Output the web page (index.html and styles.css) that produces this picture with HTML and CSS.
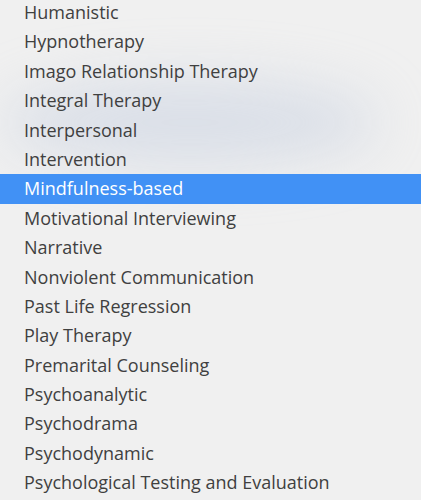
FILE: index.html
```html
<!DOCTYPE html>
<html lang="en">
<head>
    <meta charset="UTF-8" />
    <meta name="viewport" content="width=device-width, initial-scale=1.0" />
    <title>Therapy Types</title>
    <link rel="stylesheet" href="styles.css">
</head>
<body>
    <div class="picker">
        <div class="haze"></div>
        <ul class="options">
            <li>Humanistic</li>
            <li>Hypnotherapy</li>
            <li>Imago Relationship Therapy</li>
            <li>Integral Therapy</li>
            <li>Interpersonal</li>
            <li>Intervention</li>
            <li class="selected">Mindfulness-based</li>
            <li>Motivational Interviewing</li>
            <li>Narrative</li>
            <li>Nonviolent Communication</li>
            <li>Past Life Regression</li>
            <li>Play Therapy</li>
            <li>Premarital Counseling</li>
            <li>Psychoanalytic</li>
            <li>Psychodrama</li>
            <li>Psychodynamic</li>
            <li>Psychological Testing and Evaluation</li>
        </ul>
    </div>
</body>
</html>
```

FILE: styles.css
```css
    body {
        margin: 0;
        padding: 0;
        font-family: "Open Sans", Arial, sans-serif;
        background-color: #f0f0f0;
        overflow: hidden;
    }
    .picker {
        position: relative;
        width: 421px;
        height: 500px;
        overflow: hidden;
    }
    .haze {
        position: absolute;
        left: 0;
        top: 80px;
        width: 380px;
        height: 85px;
        border-radius: 50%;
        background-color: rgba(185, 198, 220, 0.4);
        filter: blur(28px);
    }
    .options {
        position: relative;
        list-style: none;
        margin: -2px 0 0 0;
        padding: 0;
    }
    .options li {
        height: 29.4px;
        line-height: 29.4px;
        padding-left: 24px;
        font-size: 18px;
        color: #404040;
        white-space: nowrap;
    }
    .options li.selected {
        background-color: #4191f5;
        color: #fff;
    }
```
